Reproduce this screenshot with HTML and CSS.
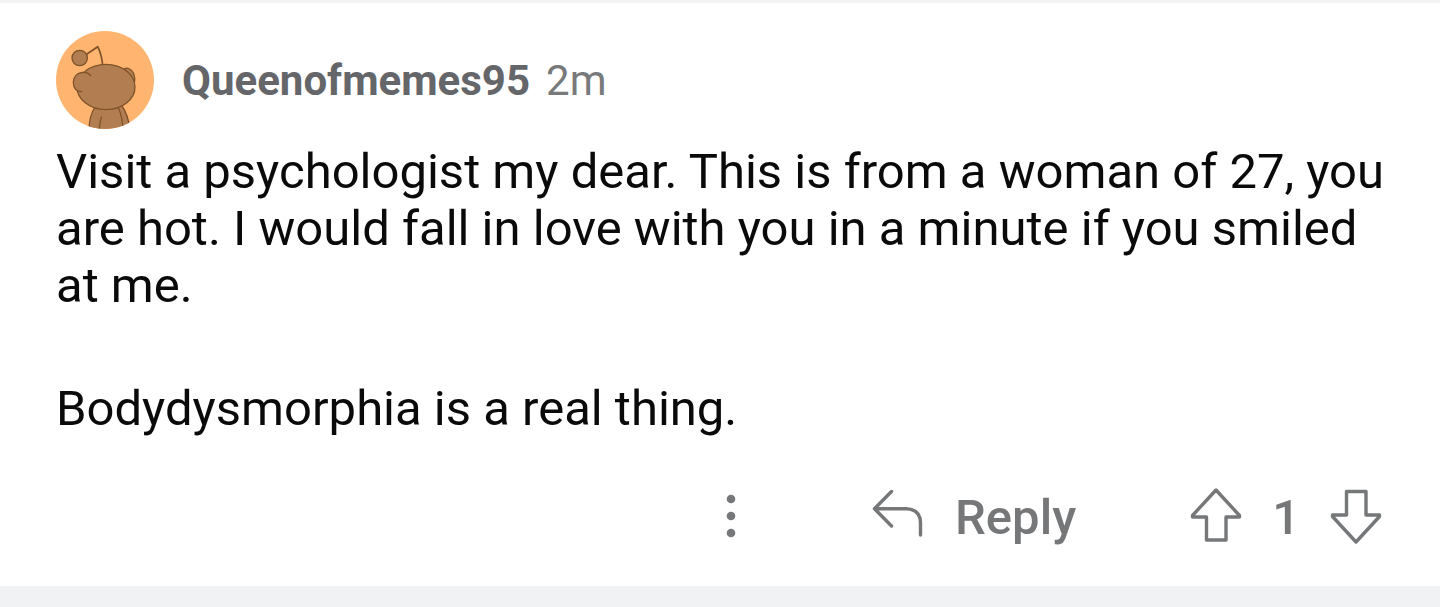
FILE: index.html
```html
<!DOCTYPE html>
<html lang="en">
<head>
    <meta charset="UTF-8">
    <meta name="viewport" content="width=device-width, initial-scale=1.0">
    <title>Comment</title>
    <link rel="stylesheet" href="styles.css">
</head>
<body>
    <article class="comment">
        <header class="comment-header">
            <svg class="avatar" viewBox="0 0 98 98" aria-hidden="true">
                <defs>
                    <clipPath id="avatar-clip"><circle cx="49" cy="49" r="49"/></clipPath>
                </defs>
                <g clip-path="url(#avatar-clip)">
                    <rect width="98" height="98" fill="#ffb470"/>
                    <g fill="#b27e51" stroke="#7f5228" stroke-width="1.3" stroke-linecap="round" stroke-linejoin="round">
                        <!-- body -->
                        <path d="M39 76C35 82 33 90 33 100H74C73 89 71 82 66 75Z"/>
                        <path d="M45.5 86Q43.5 91 43.3 99M62.5 77Q66.5 86 67 99" fill="none"/>
                        <!-- antenna -->
                        <path d="M31 23L41.7 15.7Q46 24 46.8 36" fill="none" stroke-width="1.7"/>
                        <circle cx="23.7" cy="27" r="7.7"/>
                        <!-- right ear, head, left ear -->
                        <path d="M68 38C73 35 80 41 78.5 51Z"/>
                        <ellipse cx="50" cy="56" rx="29" ry="22.7"/>
                        <path d="M34.7 44.5C32 41.5 29 41 26 41.5C20 42.5 17.3 47 17.3 51.5C17.5 57 20.5 60.5 25.7 60.7L30 52L33 43Z" stroke="none"/>
                        <path d="M34.7 44.5C32 41.5 29 41 26 41.5C20 42.5 17.3 47 17.3 51.5C17.5 57 20.5 60.5 25.7 60.7" fill="none"/>
                    </g>
                </g>
            </svg>
            <span class="username">Queenofmemes95</span>
            <time class="age">2m</time>
        </header>

        <div class="comment-body">
            <p>Visit a psychologist my dear. This is from a woman of 27, you are hot. I would fall in love with you in a minute if you smiled at me.</p>
            <p>Bodydysmorphia is a real thing.</p>
        </div>

        <footer class="actions">
            <button class="action more" type="button" aria-label="More options">
                <svg width="10" height="44" viewBox="0 0 10 44" fill="currentColor">
                    <circle cx="5" cy="5" r="4.3"/>
                    <circle cx="5" cy="22" r="4.3"/>
                    <circle cx="5" cy="39" r="4.3"/>
                </svg>
            </button>
            <button class="action reply" type="button">
                <svg class="line-icon" width="52" height="56" viewBox="0 0 52 56">
                    <path d="M19.5 3.5L2.5 20.7L19.5 38M2.5 20.7H34.5Q48.5 21.5 48.5 35V47"/>
                </svg>
                <span class="action-text">Reply</span>
            </button>
            <div class="votes">
                <button class="action" type="button" aria-label="Upvote">
                    <svg class="line-icon" width="52" height="56" viewBox="0 0 52 56">
                        <path d="M26 2L2.5 27.5V29H16.5V52H36V29H49.5V27.5Z"/>
                    </svg>
                </button>
                <span class="action-text">1</span>
                <button class="action" type="button" aria-label="Downvote">
                    <svg class="line-icon" width="52" height="56" viewBox="0 0 52 56">
                        <path d="M26 54L2.5 28.5V27H16.5V3.5H36V27H49.5V28.5Z"/>
                    </svg>
                </button>
            </div>
        </footer>
    </article>
</body>
</html>
```
FILE: styles.css
```css
body {
    margin: 0;
    background-color: #f1f2f4;
    font-family: Roboto, sans-serif;
}

.comment {
    margin-top: 3px;
    padding: 28px 52px 39px 56px;
    background-color: #fff;
}

.comment-header {
    display: flex;
    align-items: center;
    font-size: 42px;
}

.avatar {
    width: 98px;
    height: 98px;
    margin-right: 28px;
}

.username {
    margin-right: 16px;
    color: #646669;
    font-weight: 700;
}

.age {
    color: #77797b;
}

.comment-body {
    margin-top: 14px;
    color: #0a0a0a;
    font-size: 49px;
    line-height: 57px;
}

.comment-body p {
    margin: 0 0 66px;
}

.comment-body p:last-child {
    margin-bottom: 0;
}

.actions {
    display: flex;
    justify-content: flex-end;
    align-items: center;
    margin-top: 48px;
    padding-right: 6px;
    color: #767779;
    font-size: 49px;
    font-weight: 500;
    line-height: 58px;
}

.action {
    display: flex;
    align-items: center;
    padding: 0;
    border: 0;
    background: none;
    color: inherit;
    font: inherit;
    cursor: pointer;
}

.action-text {
    padding-top: 4px;
}

.more {
    margin-right: 136px;
}

.reply {
    gap: 31px;
    margin-right: 114px;
}

.votes {
    display: flex;
    align-items: center;
    gap: 30px;
}

.line-icon {
    fill: none;
    stroke: currentColor;
    stroke-width: 3.4;
    stroke-linecap: round;
    stroke-linejoin: round;
}
```
